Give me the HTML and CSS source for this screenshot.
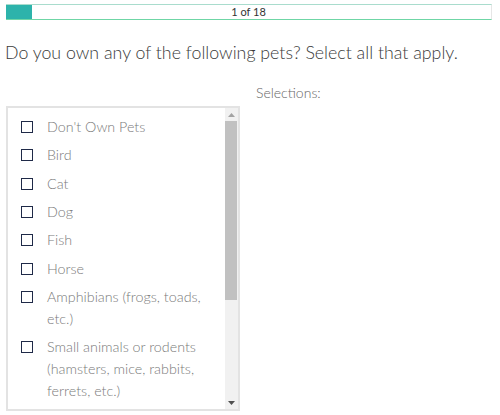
FILE: index.html
```html
<!DOCTYPE html>
<html>
<head>
<meta charset="utf-8">
<link rel="stylesheet" href="styles.css">
</head>
<body>
<div class="progress">
  <div class="progress-fill"></div>
  <div class="progress-label">1 of 18</div>
</div>
<h1 class="question">Do you own any of the following pets? Select all that apply.</h1>
<div class="answer">
  <div class="listbox">
    <ul class="options">
      <li class="option"><span class="check"></span><span class="label">Don't Own Pets</span></li>
      <li class="option"><span class="check"></span><span class="label">Bird</span></li>
      <li class="option"><span class="check"></span><span class="label">Cat</span></li>
      <li class="option"><span class="check"></span><span class="label">Dog</span></li>
      <li class="option"><span class="check"></span><span class="label">Fish</span></li>
      <li class="option"><span class="check"></span><span class="label">Horse</span></li>
      <li class="option"><span class="check"></span><span class="label">Amphibians (frogs, toads, etc.)</span></li>
      <li class="option"><span class="check"></span><span class="label">Small animals or rodents (hamsters, mice, rabbits, ferrets, etc.)</span></li>
    </ul>
    <div class="scrollbar">
      <div class="sb-btn"><svg width="7" height="4" viewBox="0 0 7 4"><polygon points="0,4 7,4 3.5,0" fill="#a3a3a3"/></svg></div>
      <div class="sb-track">
        <div class="sb-thumb"></div>
      </div>
      <div class="sb-btn"><svg width="7" height="4" viewBox="0 0 7 4"><polygon points="0,0 7,0 3.5,4" fill="#505050"/></svg></div>
    </div>
  </div>
  <div class="selections">Selections:</div>
</div>
</body>
</html>
```
FILE: styles.css
```css
html, body {
  margin: 0;
  padding: 0;
  background: #fff;
}
body {
  font-family: "Lato Light", Lato, "Open Sans", sans-serif;
  width: 500px;
  height: 415px;
  overflow: hidden;
}
.progress {
  position: relative;
  margin: 4px 0 0 6px;
  width: 485px;
  height: 14px;
  border-top: 1px solid #a9dccd;
  border-bottom: 1px solid #6fd6a6;
  border-right: 1px solid #e6e6e6;
  box-sizing: content-box;
  display: flex;
  align-items: center;
  justify-content: center;
}
.progress-fill {
  position: absolute;
  left: 0;
  top: 0;
  bottom: 0;
  width: 26px;
  background: #2db3ab;
}
.progress-label {
  font-family: Lato, sans-serif;
  font-size: 11px;
  color: #333;
  font-weight: 400;
  line-height: 14px;
}
.question {
  margin: 20px 0 0 5px;
  font-size: 17.8px;
  font-weight: 300;
  color: #3a3a3a;
  line-height: 24px;
}
.answer {
  display: flex;
  margin: 19px 0 0 6px;
}
.listbox {
  margin-top: 23px;
  width: 234px;
  height: 305px;
  box-sizing: border-box;
  border: 2px solid #e3e3e3;
  display: flex;
  overflow: hidden;
}
.options {
  list-style: none;
  margin: 0;
  padding: 5px 0 0 0;
  flex: 1;
  overflow: hidden;
}
.option {
  display: flex;
  align-items: flex-start;
  padding: 3.15px 0 3.15px 13px;
  font-size: 14.3px;
  line-height: 22px;
  font-weight: 300;
  color: #7a7a7a;
}
.check {
  flex: none;
  width: 12px;
  height: 12px;
  box-sizing: border-box;
  border: 1.8px solid #1f2a48;
  margin: 5px 14px 0 0;
}
.label {
  flex: 1;
  padding-right: 4px;
}
.scrollbar {
  flex: none;
  width: 13px;
  background: #f1f1f1;
  display: flex;
  flex-direction: column;
}
.sb-btn {
  height: 13px;
  display: flex;
  align-items: center;
  justify-content: center;
}
.sb-track {
  flex: 1;
  display: flex;
  flex-direction: column;
}
.sb-thumb {
  height: 179px;
  margin: 0 1px 0 0;
  background: #c1c1c1;
}
.selections {
  margin-left: 16px;
  font-size: 14px;
  font-weight: 300;
  color: #666;
  line-height: 20px;
}
```
